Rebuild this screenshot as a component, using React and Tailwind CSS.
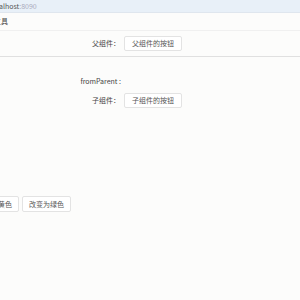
import React from 'react'

const font = { fontFamily: '"Noto Sans CJK SC", "Liberation Sans", sans-serif' }

function Btn({ children, className = '' }) {
  return (
    <button className={`h-[15px] px-[6px] border border-[#e3e3e3] bg-white rounded-[2px] text-[7px] leading-none text-[#555] ${className}`}>
      {children}
    </button>
  )
}

export default function App() {
  return (
    <div className="w-[300px] h-[300px] bg-[#fcfcfb] overflow-hidden text-[#444]" style={font}>
      <div className="h-[13px] bg-[#e8f0f8] border-b border-[#dfe6ee] flex items-center -ml-[1px] text-[7px] text-[#555]">
        alhost<span className="text-[#aab]">:8090</span>
      </div>
      <div className="h-[18px] flex items-center -ml-[6px] text-[7px] text-[#444] border-b border-[#f0f0f0]">工具</div>
      <div className="flex items-center h-[15px] mt-[5px]">
        <div className="w-[124px] text-right text-[7px] pr-[4px]">父组件：</div>
        <Btn className="px-[7px]">父组件的按钮</Btn>
      </div>
      <div className="mt-[5px] border-b border-[#e0e0e0]" />
      <div className="flex items-center h-[10px] mt-[19px]">
        <div className="w-[123px] text-right text-[7px] pr-[2px]">fromParent :</div>
      </div>
      <div className="flex items-center h-[15px] mt-[7px]">
        <div className="w-[124px] text-right text-[7px] pr-[4px]">子组件：</div>
        <Btn className="px-[7px]">子组件的按钮</Btn>
      </div>
      <div className="flex items-center gap-[3px] mt-[88px] -ml-[30px]">
        <Btn className="h-[16px]">改变为黄色</Btn>
        <Btn className="h-[16px]">改变为绿色</Btn>
      </div>
    </div>
  )
}
